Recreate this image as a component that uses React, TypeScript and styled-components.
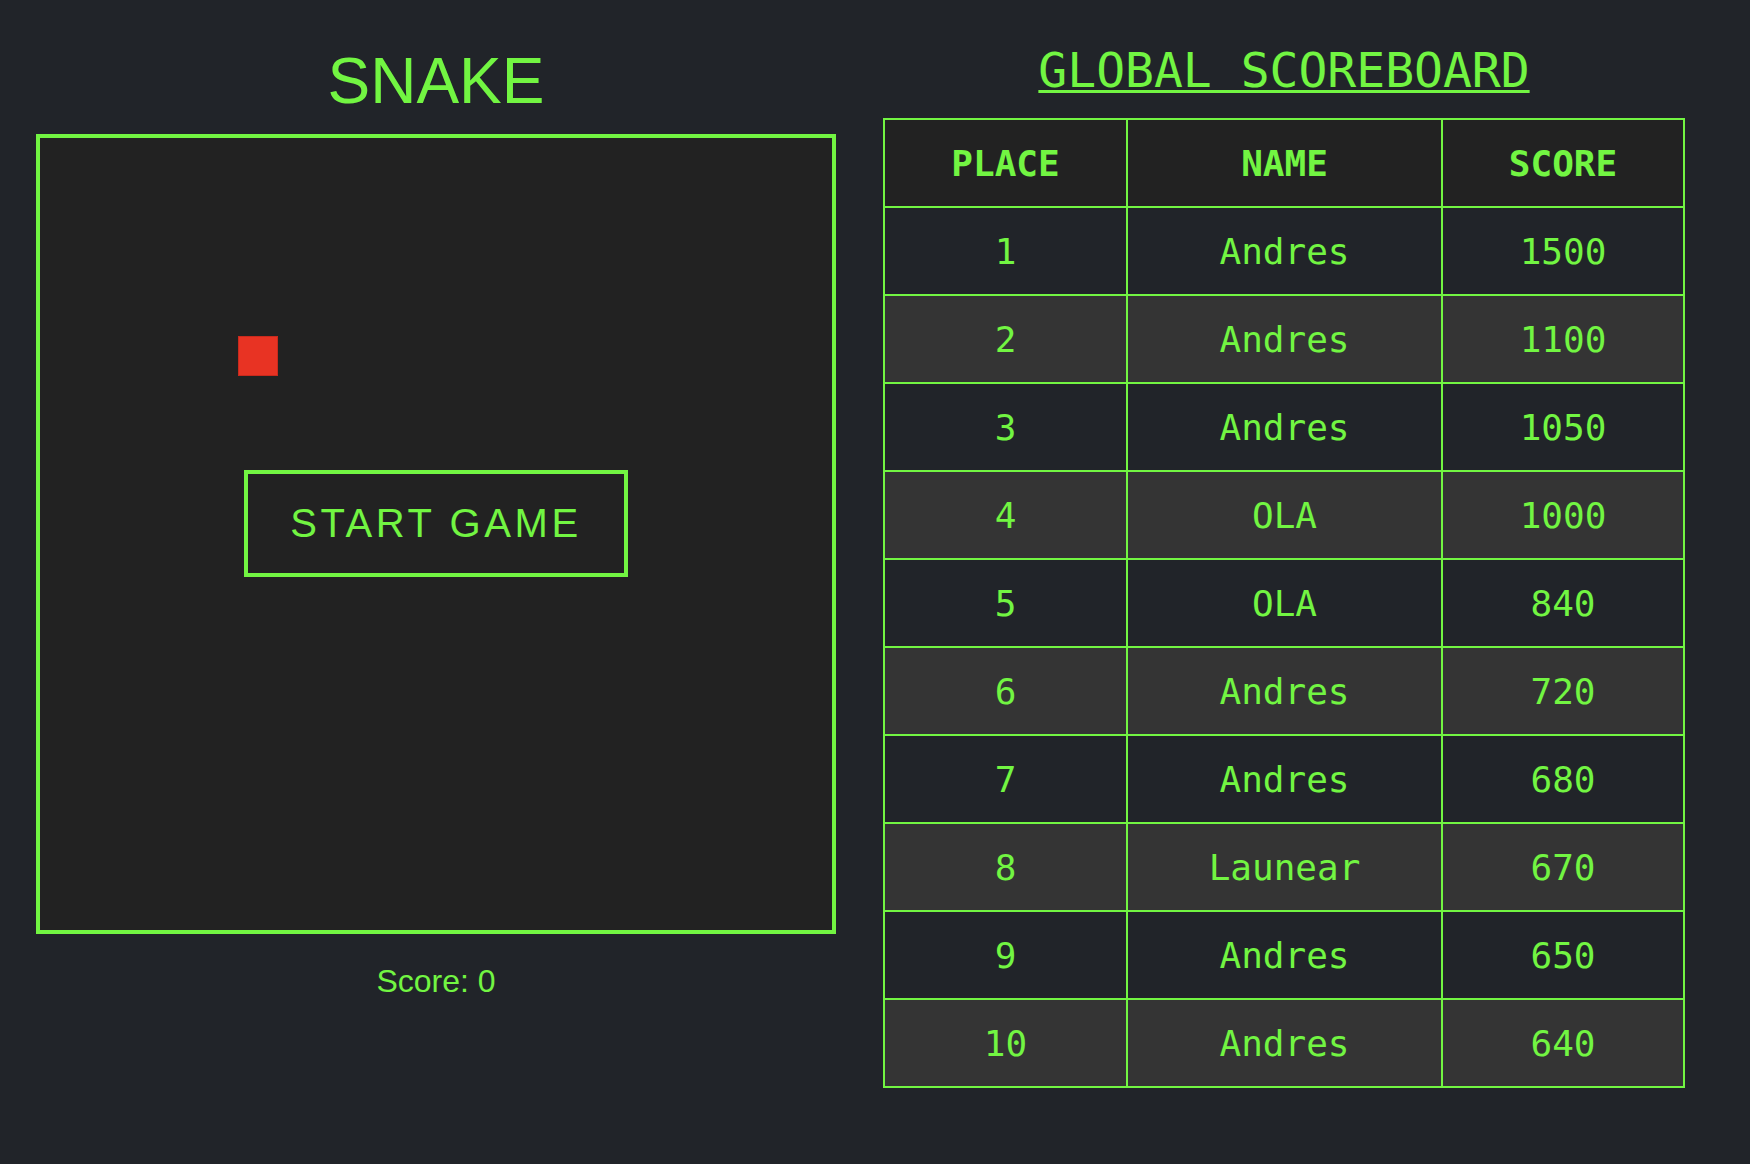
import React from "react";
import styled, { createGlobalStyle } from "styled-components";

const GREEN = "#72f542";
const PAGE_BG = "#212429";
const PANEL_BG = "#222222";
const STRIPE_BG = "#343434";

const GlobalStyle = createGlobalStyle`
  html, body {
    margin: 0;
    padding: 0;
    background: ${PAGE_BG};
  }
  body {
    font-family: "Liberation Sans", Arial, sans-serif;
    color: ${GREEN};
  }
`;

const Page = styled.main`
  display: flex;
  align-items: flex-start;
  gap: 48px;
  padding: 0 0 0 36px;
  min-height: 1164px;
  box-sizing: border-box;
`;

const GameColumn = styled.section`
  display: flex;
  flex-direction: column;
  align-items: center;
  width: 800px;
`;

const GameTitle = styled.h1`
  margin: 49px 0 21px;
  font-family: "Liberation Sans", Arial, sans-serif;
  font-weight: 400;
  font-size: 64px;
  line-height: 64px;
  color: ${GREEN};
`;

const Board = styled.div`
  position: relative;
  width: 800px;
  height: 800px;
  box-sizing: border-box;
  border: 4px solid ${GREEN};
  background: ${PANEL_BG};
`;

const Food = styled.div`
  position: absolute;
  width: 40px;
  height: 40px;
  background: #e83323;
  box-shadow: inset 0 0 0 1px #c92a1d;
`;

const StartButton = styled.button`
  position: absolute;
  top: 332px;
  left: 50%;
  transform: translateX(-50%);
  width: 384px;
  height: 107px;
  box-sizing: border-box;
  display: flex;
  align-items: center;
  justify-content: center;
  padding: 0;
  border: 4px solid ${GREEN};
  background: ${PANEL_BG};
  color: ${GREEN};
  font-family: "Liberation Sans", Arial, sans-serif;
  font-size: 40px;
  letter-spacing: 3.6px;
  cursor: pointer;
`;

const ScoreLine = styled.p`
  margin: 31px 0 0;
  font-family: "Liberation Sans", Arial, sans-serif;
  font-size: 32px;
  line-height: 32px;
  color: ${GREEN};
`;

const BoardColumn = styled.section`
  display: flex;
  flex-direction: column;
  align-items: center;
  width: 800px;
`;

const BoardTitle = styled.h2`
  margin: 46px 0 24px;
  font-family: "DejaVu Sans Mono", "Liberation Mono", monospace;
  font-weight: 400;
  font-size: 48px;
  line-height: 48px;
  color: ${GREEN};
  text-decoration: underline;
  text-decoration-thickness: 3px;
  text-underline-offset: 3px;
`;

const Table = styled.table`
  width: 800px;
  table-layout: fixed;
  border-collapse: collapse;
  font-family: "DejaVu Sans Mono", "Liberation Mono", monospace;
  font-size: 36px;
  color: ${GREEN};
`;

const Col = styled.col<{ $w: number }>`
  width: ${(p) => p.$w}px;
`;

const HeadRow = styled.tr`
  background: ${PANEL_BG};
`;

const Row = styled.tr<{ $striped: boolean }>`
  background: ${(p) => (p.$striped ? STRIPE_BG : PAGE_BG)};
`;

const HeadCell = styled.th`
  height: 86px;
  padding: 0;
  border: 2px solid ${GREEN};
  font-weight: 700;
  text-align: center;
  vertical-align: middle;
`;

const Cell = styled.td`
  height: 86px;
  padding: 0;
  border: 2px solid ${GREEN};
  font-weight: 400;
  text-align: center;
  vertical-align: middle;
`;

const scores: { name: string; score: number }[] = [
  { name: "Andres", score: 1500 },
  { name: "Andres", score: 1100 },
  { name: "Andres", score: 1050 },
  { name: "OLA", score: 1000 },
  { name: "OLA", score: 840 },
  { name: "Andres", score: 720 },
  { name: "Andres", score: 680 },
  { name: "Launear", score: 670 },
  { name: "Andres", score: 650 },
  { name: "Andres", score: 640 },
];

export default function App() {
  const food = { x: 198, y: 198 };
  return (
    <>
      <GlobalStyle />
      <Page>
        <GameColumn>
          <GameTitle>SNAKE</GameTitle>
          <Board>
            <Food style={{ left: food.x, top: food.y }} />
            <StartButton type="button">START GAME</StartButton>
          </Board>
          <ScoreLine>Score: 0</ScoreLine>
        </GameColumn>
        <BoardColumn>
          <BoardTitle>GLOBAL SCOREBOARD</BoardTitle>
          <Table>
            <colgroup>
              <Col $w={243} />
              <Col $w={315} />
              <Col $w={242} />
            </colgroup>
            <thead>
              <HeadRow>
                <HeadCell>PLACE</HeadCell>
                <HeadCell>NAME</HeadCell>
                <HeadCell>SCORE</HeadCell>
              </HeadRow>
            </thead>
            <tbody>
              {scores.map((s, i) => (
                <Row key={i} $striped={i % 2 === 1}>
                  <Cell>{i + 1}</Cell>
                  <Cell>{s.name}</Cell>
                  <Cell>{s.score}</Cell>
                </Row>
              ))}
            </tbody>
          </Table>
        </BoardColumn>
      </Page>
    </>
  );
}
